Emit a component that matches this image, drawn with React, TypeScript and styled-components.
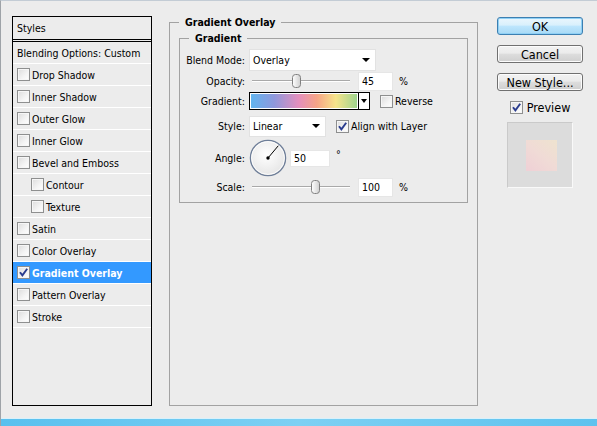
import React from 'react';
import styled, { createGlobalStyle } from 'styled-components';

const GlobalStyle = createGlobalStyle`
  html, body {
    margin: 0;
    padding: 0;
    background: #ececec;
  }
  body {
    font-family: "DejaVu Sans Condensed", "Liberation Sans", sans-serif;
  }
`;

const Window = styled.div`
  width: 597px;
  height: 426px;
  box-sizing: border-box;
  border-left: 1px solid #9ea3a8;
  border-top: 1px solid #c3ccd5;
  background: #ececec;
  display: flex;
  flex-direction: column;
  overflow: hidden;
  font-size: 10.5px;
  color: #000;
`;

const Body = styled.div`
  flex: 1;
  display: flex;
  align-items: flex-start;
  padding: 15px 0 0 11px;
`;

const Footer = styled.div`
  height: 7px;
  border-top: 1px solid #d9f1fb;
  background: linear-gradient(90deg, #59c0ee 0%, #7dd0f3 50%, #5ec2ee 100%);
`;

/* ---------- left styles list ---------- */

const StylesPanel = styled.div`
  width: 140px;
  height: 390px;
  box-sizing: border-box;
  border: 1px solid #000;
  display: flex;
  flex-direction: column;
`;

const PanelHeader = styled.div`
  height: 22px;
  border-bottom: 3px double #000;
  display: flex;
  align-items: center;
  padding-left: 4px;
`;

const StyleRow = styled.div<{ $indent?: boolean; $selected?: boolean }>`
  height: 22px;
  box-sizing: border-box;
  border-bottom: 1px solid #fff;
  display: flex;
  align-items: center;
  gap: 2px;
  padding-left: ${(p) => (p.$indent ? '18px' : '4px')};
  background: ${(p) => (p.$selected ? '#3399ff' : 'transparent')};
  color: ${(p) => (p.$selected ? '#fff' : '#000')};
  font-weight: ${(p) => (p.$selected ? 'bold' : 'normal')};
`;

/* ---------- checkbox ---------- */

const Box = styled.span`
  width: 13px;
  height: 13px;
  box-sizing: border-box;
  border: 1px solid #8e8f8f;
  background: linear-gradient(135deg, #dcdcdc 0%, #f4f4f4 60%, #ffffff 100%);
  box-shadow: inset 0 0 0 1px #f6f6f6;
  display: inline-flex;
  align-items: center;
  justify-content: center;
  flex-shrink: 0;
`;

const CheckBox: React.FC<{ checked?: boolean }> = ({ checked }) => (
  <Box>
    {checked && (
      <svg width="11" height="11" viewBox="0 0 11 11">
        <path d="M2 5.2 L4.4 8.4 L9.2 1.8" fill="none" stroke="#2a3c8e" strokeWidth="1.9" />
      </svg>
    )}
  </Box>
);

/* ---------- group boxes ---------- */

const GroupBox = styled.fieldset`
  margin: 0 0 0 17px;
  padding: 0 9px;
  width: 309px;
  height: 390px;
  box-sizing: border-box;
  min-width: 0;
  border: 1px solid #a2a2a2;
`;

const InnerGroup = styled.fieldset`
  margin: 3px 0 0 0;
  padding: 0 0 5px 0;
  min-width: 0;
  border: 1px solid #a2a2a2;
`;

const Legend = styled.legend<{ $inset?: number }>`
  padding: 0 6px;
  margin-left: ${(p) => p.$inset ?? 0}px;
  font-weight: bold;
  line-height: 13px;
`;

const FieldRow = styled.div<{ $h: number; $mt?: number }>`
  height: ${(p) => p.$h}px;
  margin-top: ${(p) => p.$mt ?? 0}px;
  display: flex;
  align-items: center;
`;

const Label = styled.span`
  width: 65px;
  padding-right: 4px;
  text-align: right;
  flex-shrink: 0;
`;

const Select = styled.div<{ $w: number; $h: number }>`
  width: ${(p) => p.$w}px;
  height: ${(p) => p.$h}px;
  box-sizing: border-box;
  background: #fff;
  border: 1px solid #e2e2e2;
  display: flex;
  align-items: center;
  justify-content: space-between;
  padding: 0 5px 0 3px;
`;

const Arrow = styled.span`
  width: 0;
  height: 0;
  border-left: 4px solid transparent;
  border-right: 4px solid transparent;
  border-top: 4px solid #000;
`;

const NumberBox = styled.div<{ $w: number; $h: number; $ml: number }>`
  width: ${(p) => p.$w}px;
  height: ${(p) => p.$h}px;
  margin-left: ${(p) => p.$ml}px;
  box-sizing: border-box;
  background: #fff;
  border: 1px solid #e6e6e6;
  display: flex;
  align-items: center;
  padding-left: 3px;
`;

const Unit = styled.span<{ $raise?: boolean }>`
  margin-left: 6px;
  margin-top: ${(p) => (p.$raise ? '-8px' : '0')};
`;

const SliderTrack = styled.div`
  position: relative;
  width: 98px;
  height: 2px;
  margin-left: 3px;
  border-top: 1px solid #a9a9a9;
  border-bottom: 1px solid #fff;
  background: #d6d6d6;
  box-sizing: border-box;
`;

const Thumb = styled.svg`
  position: absolute;
  top: -7px;
  margin-left: -4.5px;
`;

const Slider: React.FC<{ value: number; min: number; max: number }> = ({ value, min, max }) => (
  <SliderTrack>
    <Thumb
      width="9"
      height="14"
      viewBox="0 0 9 14"
      style={{ left: `${((value - min) / (max - min)) * 100}%` }}
    >
      <defs>
        <linearGradient id="thumbFill" x1="0" y1="0" x2="1" y2="0">
          <stop offset="0" stopColor="#ffffff" />
          <stop offset="1" stopColor="#cfcfcf" />
        </linearGradient>
      </defs>
      <rect x="0.5" y="0.5" width="8" height="13" rx="3" fill="url(#thumbFill)" stroke="#808080" />
    </Thumb>
  </SliderTrack>
);

const GradientPicker = styled.div`
  width: 121px;
  height: 18px;
  box-sizing: border-box;
  border: 1px solid #000;
  display: flex;
`;

const GradientStrip = styled.div`
  flex: 1;
  border: 1px solid #fff;
  background: linear-gradient(
    90deg,
    #62b4ee 0%,
    #8f98dc 22%,
    #e48fbd 45%,
    #f6a487 62%,
    #f6e48b 80%,
    #9fd48d 100%
  );
`;

const GradientDrop = styled.div`
  width: 10px;
  border-left: 1px solid #000;
  background: #fff;
  display: flex;
  align-items: center;
  justify-content: center;
`;

const SmallArrow = styled.span`
  width: 0;
  height: 0;
  border-left: 3px solid transparent;
  border-right: 3px solid transparent;
  border-top: 4px solid #000;
`;

const Toggle = styled.span<{ $ml: number }>`
  display: inline-flex;
  align-items: center;
  gap: 2px;
  margin-left: ${(p) => p.$ml}px;
`;

const AngleDial: React.FC<{ angle: number }> = ({ angle }) => {
  const r = (angle * Math.PI) / 180;
  const x = 19 + 16 * Math.cos(r);
  const y = 19 - 16 * Math.sin(r);
  return (
    <svg width="38" height="38" viewBox="0 0 38 38">
      <defs>
        <radialGradient id="dialFill" cx="0.45" cy="0.4" r="0.6">
          <stop offset="0" stopColor="#ffffff" />
          <stop offset="1" stopColor="#e6e6e6" />
        </radialGradient>
      </defs>
      <circle cx="19" cy="19" r="17.6" fill="url(#dialFill)" stroke="#6e7e98" strokeWidth="1.3" />
      <circle cx="19" cy="19" r="16.4" fill="none" stroke="#ffffff" strokeWidth="0.8" />
      <line x1="19" y1="19" x2={x} y2={y} stroke="#000" strokeWidth="1" />
      <circle cx="19" cy="19" r="1.7" fill="#000" />
    </svg>
  );
};

/* ---------- right buttons ---------- */

const ButtonColumn = styled.div`
  margin-left: 19px;
  padding-top: 1px;
  width: 86px;
  display: flex;
  flex-direction: column;
  align-items: center;
`;

const DialogButton = styled.button<{ $primary?: boolean }>`
  width: 86px;
  height: 18px;
  margin-bottom: 10px;
  box-sizing: border-box;
  padding: 0;
  border: 1px solid ${(p) => (p.$primary ? '#3c7fb1' : '#707070')};
  border-radius: 3px;
  font-family: inherit;
  font-size: 12.5px;
  line-height: 15px;
  color: #000;
  background: ${(p) =>
    p.$primary
      ? 'linear-gradient(#eaf6fd 0%, #d9f0fc 45%, #bee6fd 50%, #a7d9f5 100%)'
      : 'linear-gradient(#f2f2f2 0%, #ebebeb 45%, #dddddd 50%, #cfcfcf 100%)'};
  box-shadow: inset 0 0 0 1px ${(p) => (p.$primary ? '#8fd0f5' : '#fcfcfc')};
`;

const PreviewToggle = styled.label`
  display: flex;
  align-items: center;
  gap: 4px;
  font-size: 12.5px;
  margin-top: -1px;
`;

const PreviewBox = styled.div`
  width: 66px;
  height: 66px;
  margin-top: 7px;
  box-sizing: border-box;
  background: #dcdcdc;
  border: 1px solid #f9f9f9;
  border-top-color: #cacaca;
  border-left-color: #cacaca;
  display: flex;
  align-items: center;
  justify-content: center;
`;

const Swatch = styled.div`
  width: 31px;
  height: 31px;
  margin-left: 3px;
  background: linear-gradient(40deg, #efd0d6 0%, #f0dbd6 50%, #eee3cf 100%);
  filter: blur(0.6px);
`;

const styleItems: { name: string; indent?: boolean; checked?: boolean }[] = [
  { name: 'Drop Shadow' },
  { name: 'Inner Shadow' },
  { name: 'Outer Glow' },
  { name: 'Inner Glow' },
  { name: 'Bevel and Emboss' },
  { name: 'Contour', indent: true },
  { name: 'Texture', indent: true },
  { name: 'Satin' },
  { name: 'Color Overlay' },
  { name: 'Gradient Overlay', checked: true },
  { name: 'Pattern Overlay' },
  { name: 'Stroke' },
];

export default function App() {
  return (
    <>
      <GlobalStyle />
      <Window>
        <Body>
          <StylesPanel>
            <PanelHeader>Styles</PanelHeader>
            <StyleRow>Blending Options: Custom</StyleRow>
            {styleItems.map((item) => (
              <StyleRow key={item.name} $indent={item.indent} $selected={item.checked}>
                <CheckBox checked={item.checked} />
                {item.name}
              </StyleRow>
            ))}
          </StylesPanel>

          <GroupBox>
            <Legend>Gradient Overlay</Legend>
            <InnerGroup>
              <Legend $inset={9}>Gradient</Legend>

              <FieldRow $h={22} $mt={4}>
                <Label>Blend Mode:</Label>
                <Select $w={127} $h={22}>
                  Overlay
                  <Arrow />
                </Select>
              </FieldRow>

              <FieldRow $h={20}>
                <Label>Opacity:</Label>
                <Slider value={45} min={0} max={100} />
                <NumberBox $w={35} $h={19} $ml={8}>45</NumberBox>
                <Unit>%</Unit>
              </FieldRow>

              <FieldRow $h={20}>
                <Label>Gradient:</Label>
                <GradientPicker>
                  <GradientStrip />
                  <GradientDrop>
                    <SmallArrow />
                  </GradientDrop>
                </GradientPicker>
                <Toggle $ml={10}>
                  <CheckBox />
                  Reverse
                </Toggle>
              </FieldRow>

              <FieldRow $h={22} $mt={4}>
                <Label>Style:</Label>
                <Select $w={77} $h={21}>
                  Linear
                  <Arrow />
                </Select>
                <Toggle $ml={10}>
                  <CheckBox checked />
                  Align with Layer
                </Toggle>
              </FieldRow>

              <FieldRow $h={38} $mt={2}>
                <Label>Angle:</Label>
                <AngleDial angle={50} />
                <NumberBox $w={40} $h={17} $ml={3}>50</NumberBox>
                <Unit $raise>°</Unit>
              </FieldRow>

              <FieldRow $h={20}>
                <Label>Scale:</Label>
                <Slider value={100} min={10} max={150} />
                <NumberBox $w={35} $h={19} $ml={8}>100</NumberBox>
                <Unit>%</Unit>
              </FieldRow>
            </InnerGroup>
          </GroupBox>

          <ButtonColumn>
            <DialogButton $primary>OK</DialogButton>
            <DialogButton>Cancel</DialogButton>
            <DialogButton>New Style...</DialogButton>
            <PreviewToggle>
              <CheckBox checked />
              Preview
            </PreviewToggle>
            <PreviewBox>
              <Swatch />
            </PreviewBox>
          </ButtonColumn>
        </Body>
        <Footer />
      </Window>
    </>
  );
}
